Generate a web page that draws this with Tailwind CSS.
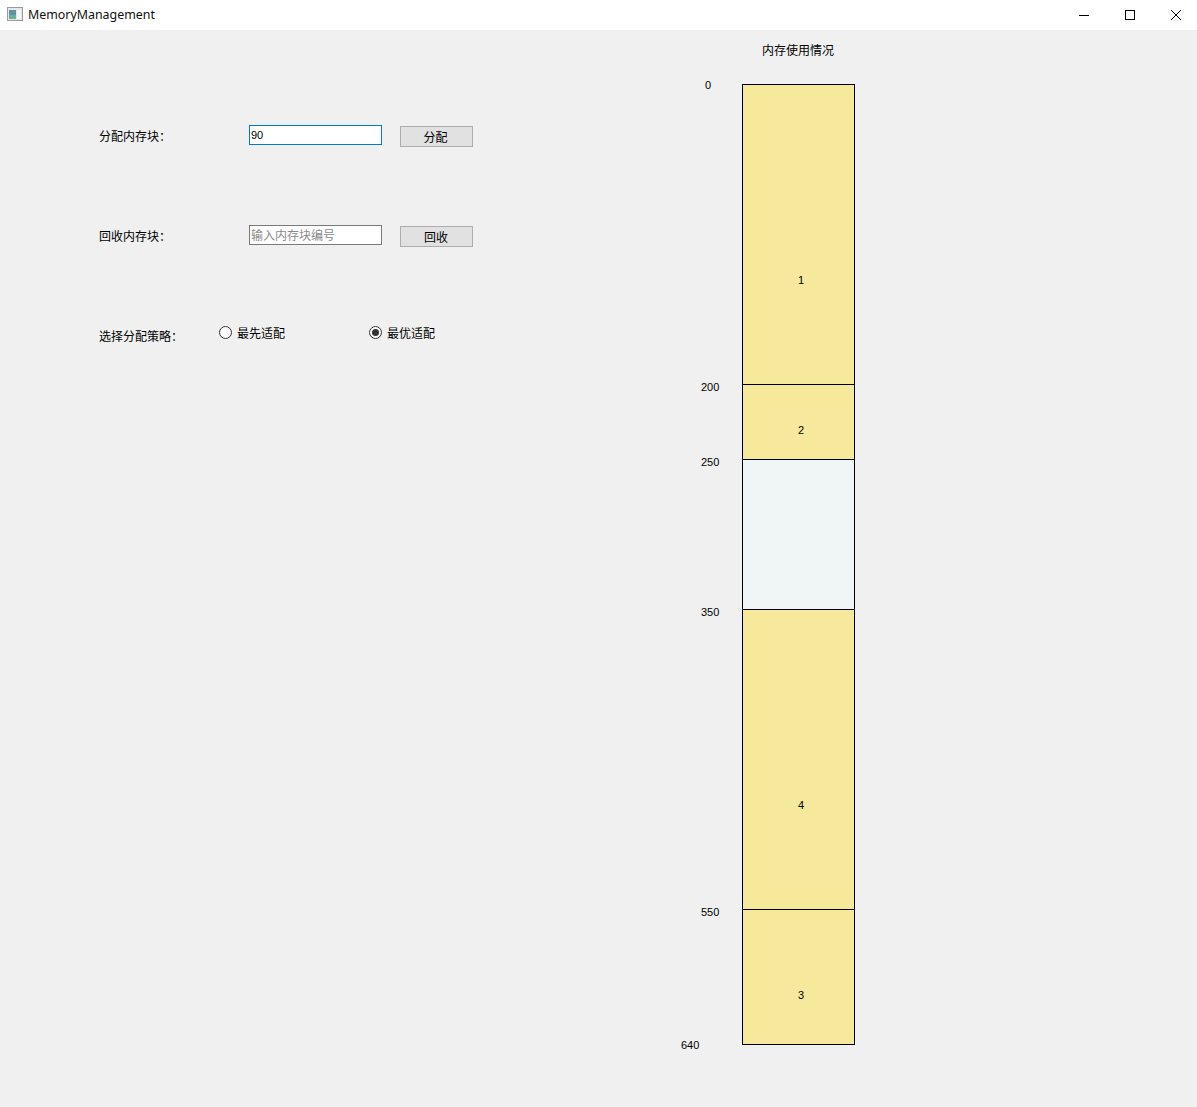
<!DOCTYPE html>
<html lang="zh-CN">
<head>
  <meta charset="UTF-8" />
  <meta name="viewport" content="width=device-width, initial-scale=1" />
  <title>MemoryManagement</title>
  <script src="https://cdn.jsdelivr.net/npm/@tailwindcss/browser@4"></script>
</head>
<body class="bg-[#f0f0f0] text-black h-[1107px] w-[1197px] overflow-hidden flex flex-col font-['Liberation_Sans','Noto_Sans_CJK_SC',sans-serif] text-[12px]">
  <!-- 标题栏 -->
  <header class="h-[30px] bg-white flex items-center pl-[7px] shrink-0">
    <svg width="16" height="14" viewBox="0 0 16 14" class="mr-[5px] -mt-[2px]">
      <rect x="0.5" y="0.5" width="15" height="13" fill="#e4e8ea" stroke="#9a9a9a" />
      <rect x="2" y="3" width="7" height="9" fill="#5f93a0" />
      <rect x="2" y="8" width="7" height="4" fill="#6fae9c" />
      <rect x="10" y="3" width="4" height="9" fill="#f4f6f7" />
    </svg>
    <span class="font-['Noto_Sans',sans-serif] text-[12.4px] text-[#101010]">MemoryManagement</span>
    <div class="ml-auto flex h-full">
      <div class="w-[46px] flex items-center justify-center pl-[2px]">
        <svg width="10" height="10" viewBox="0 0 10 10"><path d="M0 5.5H10" stroke="#000" fill="none" /></svg>
      </div>
      <div class="w-[46px] flex items-center justify-center pl-[2px]">
        <svg width="10" height="10" viewBox="0 0 10 10"><rect x="0.5" y="0.5" width="9" height="9" stroke="#000" fill="none" /></svg>
      </div>
      <div class="w-[45px] flex items-center justify-center pl-[2px]">
        <svg width="10" height="10" viewBox="0 0 10 10"><path d="M0 0L10 10M10 0L0 10" stroke="#000" fill="none" /></svg>
      </div>
    </div>
  </header>

  <div class="flex flex-1">
    <!-- 左侧操作区 -->
    <main class="w-[681px] shrink-0 pl-[99px] pt-[95px]">
      <div class="flex items-center h-[21px]">
        <label class="w-[150px] mt-[3px]">分配内存块：</label>
        <input type="text" value="90" class="w-[133px] h-[20px] -mt-[1px] bg-white border border-[#0078d7] px-[1px] text-[11px] outline-none" />
        <button class="w-[73px] h-[21px] ml-[18px] mt-[2px] bg-[#e1e1e1] border border-[#adadad] pt-[2px] pr-[2px]">分配</button>
      </div>
      <div class="flex items-center h-[21px] mt-[79px]">
        <label class="w-[150px] mt-[3px]">回收内存块：</label>
        <input type="text" placeholder="输入内存块编号" class="w-[133px] h-[20px] -mt-[1px] bg-white border border-[#7a7a7a] pl-[1px] pt-[2px] text-[12px] outline-none placeholder:text-[#8a8a8a]" />
        <button class="w-[73px] h-[21px] ml-[18px] mt-[2px] bg-[#e1e1e1] border border-[#adadad] pt-[2px] pr-[1px]">回收</button>
      </div>
      <div class="flex items-center h-[20px] mt-[77px]">
        <span class="w-[120px] mt-[7px]">选择分配策略：</span>
        <label class="w-[150px] flex items-center gap-[5px]">
          <span class="w-[13px] h-[13px] -mt-[2px] rounded-full bg-white border border-[#333]"></span>
          <span class="mt-[2px]">最先适配</span>
        </label>
        <label class="flex items-center gap-[5px]">
          <span class="w-[13px] h-[13px] -mt-[2px] rounded-full bg-white border border-[#333] flex items-center justify-center">
            <span class="w-[7px] h-[7px] rounded-full bg-[#333]"></span>
          </span>
          <span class="mt-[2px]">最优适配</span>
        </label>
      </div>
    </main>

    <!-- 内存使用情况 -->
    <section class="flex flex-col">
      <div class="w-[173px] h-[41px] pl-[61px] pt-[13px] flex justify-center">
        <span class="leading-[17px]">内存使用情况</span>
      </div>
      <div class="relative pl-[61px] pt-[13px]">
        <span class="absolute left-[24px] top-[6px] text-[11px]">0</span>
        <span class="absolute left-[20px] top-[308px] text-[11px]">200</span>
        <span class="absolute left-[20px] top-[383px] text-[11px]">250</span>
        <span class="absolute left-[20px] top-[533px] text-[11px]">350</span>
        <span class="absolute left-[20px] top-[833px] text-[11px]">550</span>
        <span class="absolute left-[0px] top-[966px] text-[11px]">640</span>
        <div class="w-[113px] border border-black flex flex-col text-[11px]">
          <div class="h-[299px] bg-[#f7e99b] flex items-center justify-center pl-[5px] pt-[91px]">1</div>
          <div class="h-[75px] bg-[#f7e99b] border-t border-black flex items-center justify-center pl-[5px] pt-[16px]">2</div>
          <div class="h-[150px] bg-[#f0f5f5] border-t border-black"></div>
          <div class="h-[300px] bg-[#f7e99b] border-t border-black flex items-center justify-center pl-[5px] pt-[92px]">4</div>
          <div class="h-[135px] bg-[#f7e99b] border-t border-black flex items-center justify-center pl-[5px] pt-[37px]">3</div>
        </div>
      </div>
    </section>
  </div>
</body>
</html>
